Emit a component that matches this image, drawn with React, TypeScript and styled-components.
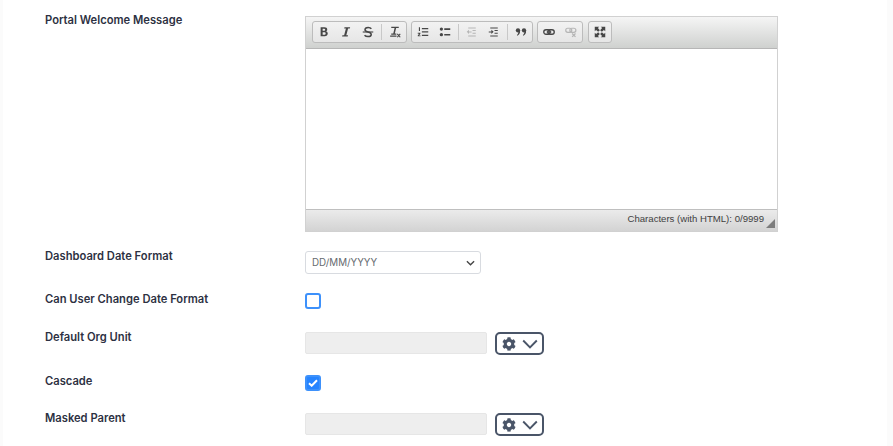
import React from "react";
import styled, { createGlobalStyle } from "styled-components";
import { FaCog } from "react-icons/fa";

const GlobalStyle = createGlobalStyle`
  html, body {
    margin: 0;
    padding: 0;
    background: #fbfbfb;
    overflow: hidden;
  }
`;

const Bold = () => (
  <svg viewBox="0 0 16 16">
    <path d="M3.500 1.500h5.200c2.300 0 3.600 1.200 3.600 3 0 1.200-.7 2.100-1.700 2.500 1.400.3 2.400 1.400 2.400 2.900 0 2.200-1.600 3.600-4 3.600H3.500V1.500zm2.700 2.200v2.500h2c.9 0 1.400-.5 1.400-1.300s-.5-1.200-1.400-1.200h-2zm0 4.600v3.400h2.400c1 0 1.600-.6 1.600-1.700s-.6-1.700-1.600-1.700H6.200z" fill="#474747" />
  </svg>
);

const Italic = () => (
  <svg viewBox="0 0 16 16">
    <path d="M6 1.500h7.500l-.4 1.700h-2.300L8.400 12.300h2.300l-.4 1.700H2.800l.4-1.700h2.300L7.900 3.200H5.600L6 1.500z" fill="#474747" />
  </svg>
);

const Strike = () => (
  <svg viewBox="0 0 16 16" fill="none" stroke="#474747">
    <path d="M12.500 3.700C11.600 2.600 10 2 8.200 2 5.600 2 4 3.200 4 5c0 3.600 8.300 2.500 8.300 6.200 0 1.800-1.800 2.900-4.200 2.900-2 0-3.700-.7-4.700-1.900" strokeWidth="2" />
    <path d="M1 8h14" strokeWidth="1.500" />
  </svg>
);

const RemoveFormat = () => (
  <svg viewBox="0 0 16 16">
    <path d="M3 1h10v1.600H9.500L7.800 10h2v1.500H3V10h2.700L7.400 2.600H3V1zM1.500 12.800h8.500V14.200H1.500z" fill="#474747" />
    <path d="M11 10.500l4 4.500M15 10.500L11 15" stroke="#474747" strokeWidth="1.500" />
  </svg>
);

const NumberedList = () => (
  <svg viewBox="0 0 16 16">
    <path d="M6.500 2.500H15v1.800H6.500zM6.500 7H15v1.800H6.500zM6.500 11.500H15v1.800H6.500z" fill="#474747" />
    <path d="M2.500 1.500h1.500v5H2.500zM1 9h3.500v1.200L2.800 12.500h1.900v1.200H1v-1.100l1.800-2.400H1z" fill="#474747" />
  </svg>
);

const BulletedList = () => (
  <svg viewBox="0 0 16 16">
    <path d="M7 3h8v2.200H7zM7 10.500h8v2.200H7z" fill="#474747" />
    <circle cx="3.200" cy="4.100" r="2.200" fill="#474747" />
    <circle cx="3.200" cy="11.600" r="2.200" fill="#474747" />
  </svg>
);

const Outdent = () => (
  <svg viewBox="0 0 16 16" style={{ opacity: 0.32 }}>
    <path d="M3 2h10v1.400H3zM8.700 5.200H13v1.400H8.700zM8.700 9h4.300v1.400H8.700zM3 12.600h10V14H3z" fill="#474747" />
    <path d="M7.500 7.200H4V5L1 7.800l3 2.800V8.500h3.500z" fill="#474747" />
  </svg>
);

const Indent = () => (
  <svg viewBox="0 0 16 16">
    <path d="M3 2h10v1.400H3zM8.700 5.200H13v1.400H8.700zM8.700 9h4.300v1.400H8.700zM3 12.600h10V14H3z" fill="#474747" />
    <path d="M1 7.200h3.500V5l3 2.800-3 2.800V8.500H1z" fill="#474747" />
  </svg>
);

const Quote = () => (
  <svg viewBox="0 0 16 16">
    <circle cx="4" cy="5.800" r="2.900" fill="#474747" />
    <circle cx="12" cy="5.800" r="2.900" fill="#474747" />
    <path d="M5 6c1.700 0 1.900 1 1.700 2.300C6.400 10.300 5.200 12 3.200 13l-.7-1c1.200-1 1.900-2.300 2-4zM13 6c1.700 0 1.900 1 1.700 2.300-.3 2-1.500 3.700-3.500 4.700l-.7-1c1.200-1 1.900-2.300 2-4z" fill="#474747" />
  </svg>
);

const Link = () => (
  <svg viewBox="0 0 16 16" fill="none" stroke="#474747" strokeWidth="1.800">
    <rect x="1" y="5" width="8.500" height="6" rx="3" />
    <rect x="6.500" y="5" width="8.500" height="6" rx="3" />
    <path d="M5 8h6" />
  </svg>
);

const Unlink = () => (
  <svg viewBox="0 0 16 16" fill="none" stroke="#474747" strokeWidth="1.600" style={{ opacity: 0.32 }}>
    <rect x="1" y="3" width="8" height="5.500" rx="2.700" />
    <rect x="6.500" y="3" width="8" height="5.500" rx="2.700" />
    <path d="M9.500 10l4.500 4.500M14 10l-4.500 4.500" />
  </svg>
);

const Maximize = () => (
  <svg viewBox="0 0 16 16">
    <path d="M1 1h6L5.200 2.800 7.800 5.500 5.500 7.800 2.800 5.200 1 7zM15 1v6l-1.800-1.800-2.700 2.600-2.300-2.300 2.600-2.700L9 1zM1 15V9l1.800 1.800 2.700-2.600 2.300 2.300-2.600 2.700L7 15zM15 15H9l1.800-1.800-2.600-2.700 2.300-2.300 2.700 2.600L15 9z" fill="#474747" />
  </svg>
);

const Chevron = () => (
  <svg width="16" height="10" viewBox="0 0 16 10" fill="none" stroke="currentColor" strokeWidth="1.900">
    <path d="M1.200 1.500L8 8.300l6.800-6.800" />
  </svg>
);

const OrgPicker = () => (
  <PickerRow>
    <ReadonlyInput />
    <PickerButton>
      <FaCog size={14} />
      <Chevron />
    </PickerButton>
  </PickerRow>
);

const App = () => {
  return (
    <>
      <GlobalStyle />
      <Page>
        <Row $height={236}>
          <Label>Portal Welcome Message</Label>
          <Editor>
            <Toolbar>
              <ToolGroup>
                <ToolButton><Bold /></ToolButton>
                <ToolButton><Italic /></ToolButton>
                <ToolButton><Strike /></ToolButton>
                <ToolSeparator />
                <ToolButton><RemoveFormat /></ToolButton>
              </ToolGroup>
              <ToolGroup>
                <ToolButton><NumberedList /></ToolButton>
                <ToolButton><BulletedList /></ToolButton>
                <ToolSeparator />
                <ToolButton><Outdent /></ToolButton>
                <ToolButton><Indent /></ToolButton>
                <ToolSeparator />
                <ToolButton><Quote /></ToolButton>
              </ToolGroup>
              <ToolGroup>
                <ToolButton><Link /></ToolButton>
                <ToolButton><Unlink /></ToolButton>
              </ToolGroup>
              <ToolGroup>
                <ToolButton><Maximize /></ToolButton>
              </ToolGroup>
            </Toolbar>
            <EditArea />
            <EditorFooter>
              <Counter>Characters (with HTML): 0/9999</Counter>
              <ResizeGrip />
            </EditorFooter>
          </Editor>
        </Row>

        <Row $height={43}>
          <Label>Dashboard Date Format</Label>
          <SelectBox>
            <span>DD/MM/YYYY</span>
            <svg width="9" height="6" viewBox="0 0 10 6" fill="none" stroke="#444" strokeWidth="1.500">
              <path d="M1 1l4 4 4-4" />
            </svg>
          </SelectBox>
        </Row>

        <Row $height={38}>
          <Label>Can User Change Date Format</Label>
          <CheckBox />
        </Row>

        <Row $height={44}>
          <Label>Default Org Unit</Label>
          <OrgPicker />
        </Row>

        <Row $height={37}>
          <Label>Cascade</Label>
          <CheckBox $checked>
            <svg width="10" height="8" viewBox="0 0 10 8" fill="none" stroke="#fff" strokeWidth="2">
              <path d="M1 4.200l2.700 2.500L9 1.200" />
            </svg>
          </CheckBox>
        </Row>

        <Row $height={32}>
          <Label>Masked Parent</Label>
          <OrgPicker />
        </Row>
      </Page>
    </>
  );
};

export default App;

const Page = styled.div`
  width: 884px;
  height: 446px;
  margin-left: 3px;
  padding: 16px 0 0 42px;
  box-sizing: border-box;
  background: #ffffff;
  font-family: "Inter", "Liberation Sans", sans-serif;
`;

const Row = styled.div<{ $height: number }>`
  display: grid;
  grid-template-columns: 260px 1fr;
  height: ${(p) => p.$height}px;
`;

const Label = styled.label`
  font-size: 11.2px;
  font-weight: 600;
  line-height: 14px;
  margin-top: -3px;
  color: #2d3142;
`;

const Editor = styled.div`
  width: 473px;
  height: 216px;
  box-sizing: border-box;
  border: 1px solid #d1d1d1;
  display: flex;
  flex-direction: column;
`;

const Toolbar = styled.div`
  height: 32px;
  box-sizing: border-box;
  padding: 4px 0 0 6px;
  display: flex;
  gap: 4px;
  background: linear-gradient(to bottom, #f5f5f5, #cfd1cf);
  border-bottom: 1px solid #b6b6b6;
`;

const ToolGroup = styled.div`
  height: 22px;
  display: flex;
  align-items: center;
  box-sizing: border-box;
  border: 1px solid #bcbcbc;
  border-radius: 3px;
  background: linear-gradient(to bottom, #f2f2f2, #e6e6e6);

  &:last-child {
    margin-left: 1px;
  }
`;

const ToolButton = styled.span`
  width: 22px;
  height: 20px;
  display: flex;
  align-items: center;
  justify-content: center;

  svg {
    width: 12px;
    height: 12px;
  }
`;

const ToolSeparator = styled.span`
  width: 1px;
  height: 16px;
  margin: 0 2px;
  background: #c8c8c8;
`;

const EditArea = styled.div`
  flex: 1;
  background: #ffffff;
`;

const EditorFooter = styled.div`
  position: relative;
  height: 22px;
  box-sizing: border-box;
  padding-right: 13px;
  display: flex;
  align-items: center;
  justify-content: flex-end;
  background: linear-gradient(to bottom, #ebebeb, #d3d3d3);
  border-top: 1px solid #bfbfbf;
`;

const Counter = styled.span`
  font-family: "Liberation Sans", Arial, sans-serif;
  font-size: 9.6px;
  color: #3f3f3f;
  margin-bottom: 4px;
`;

const ResizeGrip = styled.span`
  position: absolute;
  right: 2px;
  bottom: 3px;
  width: 0;
  height: 0;
  border-style: solid;
  border-width: 0 0 9px 9px;
  border-color: transparent transparent #7d7d7d transparent;
`;

const SelectBox = styled.div`
  width: 176px;
  height: 23px;
  box-sizing: border-box;
  margin-top: -1px;
  padding: 0 5px 0 6px;
  display: flex;
  align-items: center;
  justify-content: space-between;
  background: #ffffff;
  border: 1px solid #d8dbe0;
  border-radius: 3px;
  font-size: 9.8px;
  color: #666a70;
`;

const CheckBox = styled.div<{ $checked?: boolean }>`
  width: 16px;
  height: 16px;
  box-sizing: border-box;
  margin-top: -2px;
  display: flex;
  align-items: center;
  justify-content: center;
  border-radius: 3px;
  border: 2px solid #3d91fb;
  background: ${(p) => (p.$checked ? "#2684ff" : "#ffffff")};
`;

const PickerRow = styled.div`
  display: flex;
  align-items: flex-start;
  align-self: start;
  gap: 8px;
  margin-top: -1px;
`;

const ReadonlyInput = styled.div`
  width: 182px;
  height: 22px;
  box-sizing: border-box;
  background: #eeeeee;
  border: 1px solid #e6e6e6;
  border-radius: 2px;
`;

const PickerButton = styled.div`
  width: 49px;
  height: 23px;
  box-sizing: border-box;
  display: flex;
  align-items: center;
  justify-content: center;
  gap: 6px;
  border: 2px solid #4a5568;
  border-radius: 5px;
  background: #ffffff;
  color: #4a5568;
`;
